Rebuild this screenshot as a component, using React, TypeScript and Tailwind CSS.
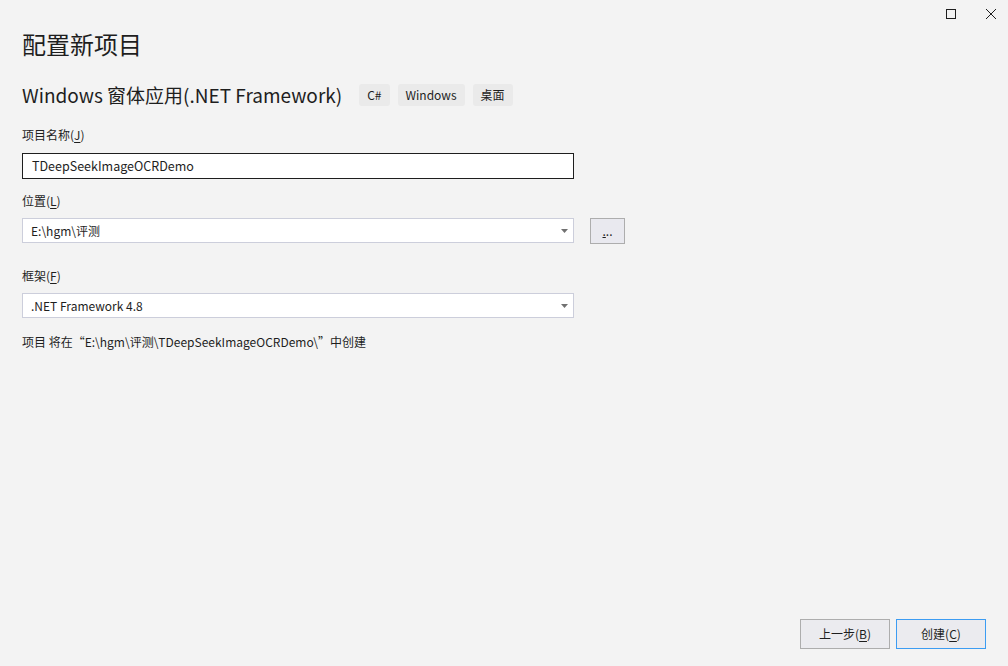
import React from "react";

const font = { fontFamily: '"Noto Sans CJK SC", "Noto Sans", sans-serif' };

// underlined access key, like 项目名称(J)
const Key = ({ k }: { k: string }) => (
  <>
    (<span className="underline underline-offset-2">{k}</span>)
  </>
);

const Tag = ({ children }: { children: React.ReactNode }) => (
  <span className="h-[22px] px-[8px] flex items-center rounded-[3px] bg-[#eaeaea] text-[12px] text-[#1e1e1e]">
    {children}
  </span>
);

const Label = ({ text, k, className }: { text: string; k: string; className: string }) => (
  <div className={`h-[18px] leading-[18px] text-[12px] text-[#1e1e1e] ${className}`}>
    {text}
    <Key k={k} />
  </div>
);

const Select = ({ value, className }: { value: string; className: string }) => (
  <div
    className={`w-[552px] h-[25px] bg-white border border-[#cccedb] flex items-center justify-between pl-[8px] pr-[5px] text-[12px] text-[#1e1e1e] ${className}`}
  >
    <span>{value}</span>
    <svg width="7" height="4" viewBox="0 0 7 4">
      <path d="M0 0h7L3.5 4z" fill="#717171" />
    </svg>
  </div>
);

const App = () => {
  return (
    <div className="w-[1008px] h-[666px] bg-[#f3f3f3] flex flex-col" style={font}>
      {/* window controls */}
      <div className="h-[28px] flex justify-end items-start pt-[9px] pr-[12px] gap-[30px]">
        <svg width="10" height="10" viewBox="0 0 10 10">
          <rect x="0.5" y="0.5" width="9" height="9" fill="none" stroke="#1e1e1e" />
        </svg>
        <svg width="10" height="10" viewBox="0 0 10 10">
          <path d="M0 0L10 10M10 0L0 10" stroke="#1e1e1e" strokeWidth="1" />
        </svg>
      </div>

      <div className="px-[22px] flex flex-col">
        <h1 className="text-[24px] leading-[32px] text-[#1e1e1e] font-normal">配置新项目</h1>

        <div className="mt-[24px] flex items-center h-[22px]">
          <span className="text-[19px] leading-[22px] text-[#1e1e1e] mr-[17px]">Windows 窗体应用(.NET Framework)</span>
          <div className="flex gap-[8px]">
            <Tag>C#</Tag>
            <Tag>Windows</Tag>
            <Tag>桌面</Tag>
          </div>
        </div>

        <Label text="项目名称" k="J" className="mt-[20px]" />
        <div className="mt-[9px] w-[552px] h-[26px] bg-white border border-[#1e1e1e] flex items-center pl-[9px] text-[12.5px] text-[#1e1e1e]">
          TDeepSeekImageOCRDemo
        </div>

        <Label text="位置" k="L" className="mt-[13px]" />
        <div className="mt-[8px] flex items-start gap-[16px]">
          <Select value="E:\hgm\评测" className="" />
          <button className="w-[35px] h-[26px] bg-[#e9e9ef] border border-[#adadad] text-[12px] text-[#1e1e1e] leading-none">
            <span className="underline">.</span>..
          </button>
        </div>

        <Label text="框架" k="F" className="mt-[23px]" />
        <Select value=".NET Framework 4.8" className="mt-[8px]" />

        <div className="mt-[15px] h-[18px] leading-[18px] text-[12px] text-[#1e1e1e]">
          项目 将在“E:\hgm\评测\TDeepSeekImageOCRDemo\”中创建
        </div>
      </div>

      <div className="mt-auto mb-[17px] mr-[22px] flex justify-end gap-[6px]">
        <button className="w-[90px] h-[30px] bg-[#ebebef] border border-[#adadad] text-[12px] text-[#1e1e1e]">
          上一步<Key k="B" />
        </button>
        <button className="w-[90px] h-[30px] bg-[#ebebef] border border-[#3c9cf2] text-[12px] text-[#1e1e1e]">
          创建<Key k="C" />
        </button>
      </div>
    </div>
  );
};

export default App;
